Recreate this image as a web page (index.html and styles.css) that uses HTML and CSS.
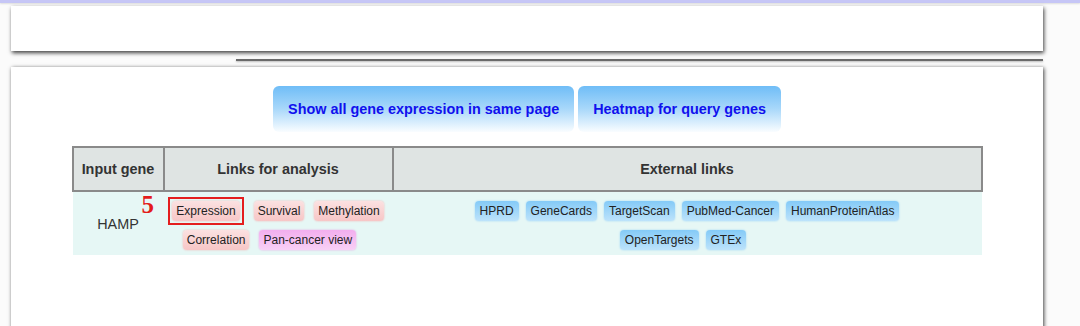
FILE: index.html
```html
<!DOCTYPE html>
<html>
<head>
<meta charset="utf-8">
<link rel="stylesheet" href="styles.css">
</head>
<body>
<div class="topbar"></div>
<div class="page">
  <div class="header-box"></div>
  <div class="rule"></div>
  <div class="main-box">
    <div class="actions">
      <a class="btn" href="#">Show all gene expression in same page</a>
      <a class="btn" href="#">Heatmap for query genes</a>
    </div>
    <table class="results">
      <colgroup><col class="c1"><col class="c2"><col class="c3"></colgroup>
      <thead>
        <tr><th>Input gene</th><th>Links for analysis</th><th>External links</th></tr>
      </thead>
      <tbody>
        <tr>
          <td class="gene">HAMP</td>
          <td class="links">
            <div class="stack">
              <span class="step">5</span>
              <div class="badges">
                <span class="marked"><a class="badge pink" href="#">Expression</a></span>
                <a class="badge pink" href="#">Survival</a>
                <a class="badge pink" href="#">Methylation</a>
              </div>
              <div class="badges shifted">
                <a class="badge pink" href="#">Correlation</a>
                <a class="badge violet" href="#">Pan-cancer view</a>
              </div>
            </div>
          </td>
          <td class="links">
            <div class="stack">
              <div class="badges ext">
                <a class="badge blue" href="#">HPRD</a>
                <a class="badge blue" href="#">GeneCards</a>
                <a class="badge blue" href="#">TargetScan</a>
                <a class="badge blue" href="#">PubMed-Cancer</a>
                <a class="badge blue" href="#">HumanProteinAtlas</a>
              </div>
              <div class="badges ext ext-second">
                <a class="badge blue" href="#">OpenTargets</a>
                <a class="badge blue" href="#">GTEx</a>
              </div>
            </div>
          </td>
        </tr>
      </tbody>
    </table>
  </div>
</div>
</body>
</html>
```
FILE: styles.css
```css
html, body {
  margin: 0;
  padding: 0;
  background: #fbfbfb;
  font-family: "Liberation Sans", Arial, sans-serif;
  overflow: hidden;
}
.topbar {
  height: 3px;
  background: #c6c6f6;
  box-shadow: 0 1px 2px rgba(0,0,0,0.12);
}
.page {
  padding: 0 37px 0 11px;
}
.header-box {
  margin-top: 3px;
  height: 45px;
  background: #fff;
  box-shadow: 1px 2px 4px rgba(0,0,0,0.75);
}
.rule {
  margin-top: 8px;
  margin-left: 225px;
  height: 2px;
  background: #6a6a6a;
  box-shadow: 0 1px 2px rgba(0,0,0,0.25);
}
.main-box {
  margin-top: 6px;
  height: 300px;
  background: #fff;
  padding-top: 19px;
  box-sizing: border-box;
  box-shadow: 1px 1px 4px rgba(0,0,0,0.75);
}
.actions {
  display: flex;
  justify-content: center;
  gap: 4px;
}
.btn {
  display: block;
  height: 46px;
  line-height: 46px;
  padding: 0 15px;
  font-size: 14.4px;
  font-weight: bold;
  color: #1010ee;
  text-decoration: none;
  border-radius: 6px;
  background: linear-gradient(to bottom, #6fbdf7 0%, #a9d8fa 50%, #fafdff 100%);
}
.results {
  margin: 14px auto 0;
  width: 909px;
  table-layout: fixed;
  border-collapse: collapse;
}
.c1 { width: 91px; }
.c2 { width: 229px; }
.c3 { width: 589px; }
.results th {
  height: 42px;
  padding: 0;
  background: #dfe4e3;
  border: 2px solid #8a8a8a;
  color: #333;
  font-size: 14.4px;
  font-weight: bold;
}
.results td {
  background: #e6f7f5;
  padding: 7px 0 3px;
  vertical-align: top;
}
.results td.gene {
  vertical-align: middle;
  text-align: center;
  font-size: 14.4px;
  color: #333;
  padding: 0;
}
.stack {
  position: relative;
  display: flex;
  flex-direction: column;
  row-gap: 5px;
}
.badges {
  display: flex;
  justify-content: center;
  align-items: center;
  column-gap: 10px;
  height: 24px;
}
.badges.shifted {
  margin-right: 17px;
}
.badges.ext {
  column-gap: 7px;
}
.badges.ext-second {
  margin-right: 8px;
}
.badge {
  display: block;
  padding: 3px 4px;
  line-height: 14px;
  font-size: 12px;
  color: #222;
  text-decoration: none;
  border-radius: 4px;
}
.blue {
  padding: 3px 5px;
}
.pink {
  background: linear-gradient(to bottom, #fbe1e1, #f7c6c6);
  box-shadow: 0 0 2px #f1b3b3;
}
.violet {
  background: linear-gradient(to bottom, #f2aeee, #f8d0f6);
  box-shadow: 0 0 2px #e7a0e4;
}
.blue {
  background: linear-gradient(to bottom, #84caf7, #bde3fb);
  box-shadow: 0 0 2px #9bd3f7;
}
.marked {
  display: block;
  border: 2px solid #e41e1e;
  padding: 2px;
  margin-left: -4px;
}
.step {
  position: absolute;
  left: -22px;
  top: -7px;
  font-family: "Liberation Serif", "Times New Roman", serif;
  font-size: 25px;
  line-height: 25px;
  font-weight: bold;
  color: #e31b1b;
}
```
